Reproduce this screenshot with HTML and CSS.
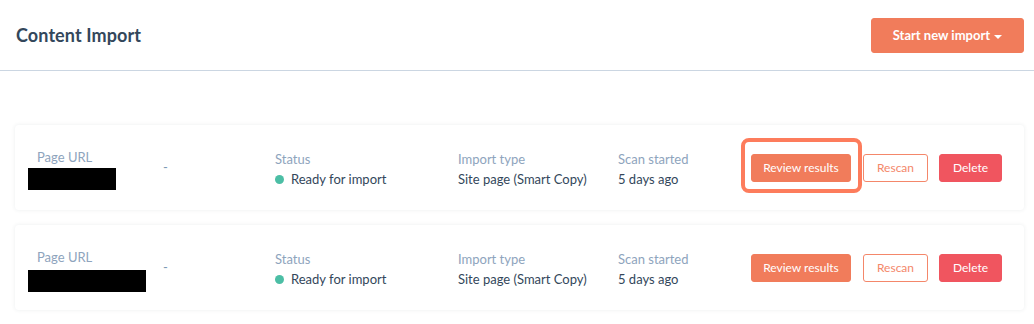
FILE: index.html
```html
<html>
<head>
    <link rel="stylesheet" href="styles.css">
</head>
<body>
    <div class="header">
        <h1 class="title">Content Import</h1>
        <button class="btn btn-primary btn-large">Start new import <span class="caret"></span></button>
    </div>

    <div class="import-list">
        <!-- Row 1 -->
        <div class="import-card">
            <div class="field">
                <div class="field-label">Page URL</div>
                <div class="redacted"></div>
            </div>
            <div class="dash">-</div>
            <div class="field">
                <div class="field-label">Status</div>
                <div class="field-value"><span class="status-dot"></span>Ready for import</div>
            </div>
            <div class="field">
                <div class="field-label">Import type</div>
                <div class="field-value">Site page (Smart Copy)</div>
            </div>
            <div class="field">
                <div class="field-label">Scan started</div>
                <div class="field-value">5 days ago</div>
            </div>
            <div class="actions">
                <div class="highlight">
                    <button class="btn btn-primary">Review results</button>
                    <span class="highlight-ring"></span>
                </div>
                <button class="btn btn-secondary">Rescan</button>
                <button class="btn btn-danger">Delete</button>
            </div>
        </div>

        <!-- Row 2 -->
        <div class="import-card">
            <div class="field">
                <div class="field-label">Page URL</div>
                <div class="redacted redacted-wide"></div>
            </div>
            <div class="dash">-</div>
            <div class="field">
                <div class="field-label">Status</div>
                <div class="field-value"><span class="status-dot"></span>Ready for import</div>
            </div>
            <div class="field">
                <div class="field-label">Import type</div>
                <div class="field-value">Site page (Smart Copy)</div>
            </div>
            <div class="field">
                <div class="field-label">Scan started</div>
                <div class="field-value">5 days ago</div>
            </div>
            <div class="actions">
                <button class="btn btn-primary">Review results</button>
                <button class="btn btn-secondary">Rescan</button>
                <button class="btn btn-danger">Delete</button>
            </div>
        </div>
    </div>
</body>
</html>
```

FILE: styles.css
```css
body {
    margin: 0;
    background-color: #fff;
    font-family: Lato, "Open Sans", sans-serif;
    color: #33475b;
}
.header {
    display: flex;
    align-items: center;
    justify-content: space-between;
    height: 70px;
    padding: 0 10px 0 16px;
    border-bottom: 1px solid #cbd6e2;
}
.title {
    margin: 0;
    font-size: 18px;
    font-weight: 700;
    color: #33475b;
    letter-spacing: 0.1px;
}
.btn {
    font-family: Lato, "Open Sans", sans-serif;
    font-size: 12px;
    height: 28px;
    padding: 0;
    border-radius: 3px;
    border: 1px solid transparent;
    color: #fff;
    text-align: center;
    white-space: nowrap;
    cursor: pointer;
}
.btn-large {
    height: 35px;
    font-size: 13px;
    font-weight: 700;
}
.btn-primary {
    background-color: #f17c5b;
    border-color: #f17c5b;
    width: 100px;
}
.btn-large.btn-primary {
    width: 153px;
}
.btn-secondary {
    background-color: #fff;
    border-color: #f4876a;
    color: #f4876a;
    width: 65px;
}
.btn-danger {
    background-color: #f0555f;
    border-color: #f0555f;
    width: 63px;
}
.caret {
    display: inline-block;
    width: 0;
    height: 0;
    margin-left: 1px;
    vertical-align: middle;
    border-left: 4px solid transparent;
    border-right: 4px solid transparent;
    border-top: 4px solid #fff;
}
.import-list {
    display: flex;
    flex-direction: column;
    gap: 15px;
    padding: 54px 10px 0 15px;
}
.import-card {
    display: grid;
    grid-template-columns: 126px 112px 183px 160px 1fr auto;
    align-items: center;
    height: 85px;
    padding: 0 22px;
    background-color: #fff;
    border-radius: 4px;
    box-shadow: 0 0 4px rgba(45, 62, 80, 0.09);
}
.field {
    padding-top: 3px;
}
.field-label {
    font-size: 13px;
    line-height: 18px;
    color: #8ea4bd;
}
.field-value {
    font-size: 13px;
    line-height: 18px;
    margin-top: 2px;
    color: #33475b;
    display: flex;
    align-items: center;
}
.redacted {
    width: 88px;
    height: 22px;
    margin: 2px 0 0 -9px;
    background-color: #000;
}
.redacted-wide {
    width: 118px;
    margin-top: 4px;
    margin-bottom: -2px;
}
.dash {
    font-size: 13px;
    color: #7c98b6;
    margin-top: -2px;
}
.status-dot {
    display: inline-block;
    width: 9px;
    height: 9px;
    margin-right: 7px;
    border-radius: 50%;
    background-color: #4cbea5;
}
.actions {
    display: flex;
    align-items: center;
    gap: 12px;
}
.actions .btn-danger {
    margin-left: -1px;
}
.highlight {
    position: relative;
    display: flex;
}
.highlight-ring {
    position: absolute;
    left: -10px;
    top: -16px;
    right: -11px;
    bottom: -11px;
    border: 4px solid #fd7c5c;
    border-radius: 8px;
    pointer-events: none;
}
```
